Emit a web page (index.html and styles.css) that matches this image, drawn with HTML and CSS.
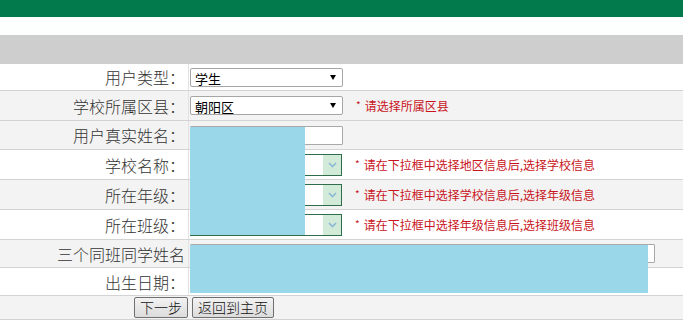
FILE: index.html
```html
<!DOCTYPE html>
<html lang="zh-CN">
<head>
    <meta charset="UTF-8">
    <meta name="viewport" content="width=device-width, initial-scale=1.0">
    <title>用户注册</title>
    <link rel="stylesheet" href="styles.css">
</head>
<body>
    <div class="topbar"></div>
    <div class="gap"></div>
    <div class="band"></div>

    <div class="form">
        <div class="row h26">
            <div class="label">用户类型：</div>
            <div class="value">
                <span class="pick">
                    <select class="sel"><option>学生</option></select>
                    <svg class="caret" width="6" height="5" viewBox="0 0 6 5"><path d="M0 0H6L3 5Z" fill="#000"/></svg>
                </span>
            </div>
        </div>
        <div class="row h29 alt">
            <div class="label">学校所属区县：</div>
            <div class="value">
                <span class="pick">
                    <select class="sel"><option>朝阳区</option></select>
                    <svg class="caret" width="6" height="5" viewBox="0 0 6 5"><path d="M0 0H6L3 5Z" fill="#000"/></svg>
                </span>
                <span class="hint"><i>*</i>请选择所属区县</span>
            </div>
        </div>
        <div class="row h28 alt">
            <div class="label">用户真实姓名：</div>
            <div class="value">
                <input class="txt" type="text">
            </div>
        </div>
        <div class="row h29">
            <div class="label">学校名称：</div>
            <div class="value">
                <span class="pick win">
                    <select class="sel"><option></option></select>
                    <span class="arrow"><svg width="9" height="6" viewBox="0 0 9 6"><path d="M1 1L4.5 4.5L8 1" fill="none" stroke="#8cb6d6" stroke-width="1.6"/></svg></span>
                </span>
                <span class="hint"><i>*</i>请在下拉框中选择地区信息后,选择学校信息</span>
            </div>
        </div>
        <div class="row h29 alt">
            <div class="label">所在年级：</div>
            <div class="value">
                <span class="pick win">
                    <select class="sel"><option></option></select>
                    <span class="arrow"><svg width="9" height="6" viewBox="0 0 9 6"><path d="M1 1L4.5 4.5L8 1" fill="none" stroke="#8cb6d6" stroke-width="1.6"/></svg></span>
                </span>
                <span class="hint"><i>*</i>请在下拉框中选择学校信息后,选择年级信息</span>
            </div>
        </div>
        <div class="row h29">
            <div class="label">所在班级：</div>
            <div class="value">
                <span class="pick win">
                    <select class="sel"><option></option></select>
                    <span class="arrow"><svg width="9" height="6" viewBox="0 0 9 6"><path d="M1 1L4.5 4.5L8 1" fill="none" stroke="#8cb6d6" stroke-width="1.6"/></svg></span>
                </span>
                <span class="hint"><i>*</i>请在下拉框中选择年级信息后,选择班级信息</span>
            </div>
        </div>
        <div class="row h27 alt">
            <div class="label">三个同班同学姓名</div>
            <div class="value">
                <input class="txt wide" type="text">
            </div>
        </div>
        <div class="row h27">
            <div class="label">出生日期：</div>
            <div class="value"></div>
        </div>
        <div class="row h23 alt">
            <div class="label btns"><button>下一步</button></div>
            <div class="value btns"><button>返回到主页</button></div>
        </div>

        <!-- redacted areas -->
        <div class="mask mask-a"></div>
        <div class="mask mask-b"></div>
    </div>
</body>
</html>
```

FILE: styles.css
```css
body {
    margin: 0;
    font-family: "Noto Sans CJK SC", "Liberation Sans", sans-serif;
    background: #fff;
}
.topbar { height: 17px; background: #037a4c; }
.gap { height: 18px; background: #fdfefe; }
.band { height: 29px; background: #cecece; }

.form { position: relative; }
.row {
    display: grid;
    grid-template-columns: 189px 1fr;
    border-bottom: 1px solid #d3d3d3;
    background: #fff;
}
.row.alt { background: #f3f3f3; }
.h23 { height: 23px; }
.h26 { height: 26px; }
.h27 { height: 27px; }
.h28 { height: 28px; }
.h29 { height: 29px; }

.label {
    display: flex;
    align-items: center;
    justify-content: flex-end;
    padding-right: 3px;
    font-size: 16px;
    font-weight: 300;
    color: #333;
    border-right: 1px solid #e2e2e2;
    white-space: nowrap;
}
.value {
    display: flex;
    align-items: center;
    gap: 13px;
    padding-left: 1px;
}

.pick { position: relative; display: inline-flex; }
.sel {
    appearance: none;
    -webkit-appearance: none;
    box-sizing: border-box;
    width: 153px;
    height: 19px;
    padding: 0 0 0 4px;
    border: 1px solid #a6a6a6;
    border-radius: 2px;
    background: #fff;
    font-family: inherit;
    font-size: 13px;
    color: #000;
    outline: none;
}
.caret { position: absolute; right: 7px; top: 7px; }

.pick.win .sel {
    width: 152px;
    height: 22px;
    border: 1px solid #2f6d4b;
    border-radius: 0;
}
.arrow {
    position: absolute;
    right: 1px;
    top: 1px;
    bottom: 1px;
    width: 18px;
    background: #d2ebd9;
    display: flex;
    align-items: center;
    justify-content: center;
}

.txt {
    box-sizing: border-box;
    width: 153px;
    height: 19px;
    margin: 0;
    border: 1px solid #a9a9a9;
    border-radius: 1px;
    background: #fff;
    outline: none;
}
.txt.wide { width: 465px; }

.hint {
    font-size: 12px;
    color: #c8151d;
    white-space: nowrap;
}
.hint i {
    font-style: normal;
    font-size: 10px;
    margin-right: 4px;
    vertical-align: 2px;
}

.btns { padding: 0; border-right: none; }
.label.btns { padding-right: 1px; }
.value.btns { padding-left: 3px; }
button {
    height: 21px;
    padding: 0 5px;
    border: 1px solid #707070;
    border-radius: 2px;
    background: linear-gradient(#f2f2f2, #dcdcdc);
    font-family: inherit;
    font-size: 14px;
    font-weight: 300;
    line-height: 19px;
    color: #111;
}

.mask { position: absolute; background: #9ad8e9; }
.mask-a { left: 190px; top: 63px; width: 115px; height: 108px; }
.mask-b { left: 190px; top: 181px; width: 458px; height: 48px; }
```
